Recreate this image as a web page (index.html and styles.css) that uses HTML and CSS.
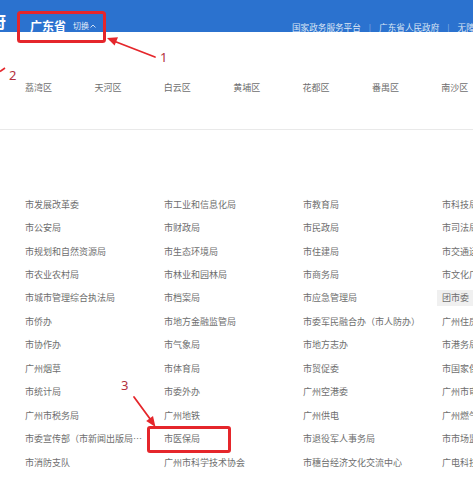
FILE: index.html
```html
<!DOCTYPE html>
<html lang="zh-CN">
<head>
<meta charset="utf-8">
<title>广东省</title>
<link rel="stylesheet" href="styles.css">
</head>
<body>
<div class="page">
  <header class="topbar">
    <span class="logo">府</span>
    <span class="province">广东省</span>
    <span class="switch">切换<svg class="caret" width="6" height="4" viewBox="0 0 6 4"><path d="M0.5 3.5 L3 1 L5.5 3.5" fill="none" stroke="#dfe9f6" stroke-width="0.9"/></svg></span>
    <nav class="links">
      <a>国家政务服务平台</a><span class="sep">|</span><a>广东省人民政府</a><span class="sep">|</span><a>无障碍浏览</a>
    </nav>
  </header>

  <section class="districts">
    <span>荔湾区</span><span>天河区</span><span>白云区</span><span>黄埔区</span><span>花都区</span><span>番禺区</span><span>南沙区</span>
  </section>

  <section class="depts">
    <div class="cell"><span class="item">市发展改革委</span></div>
    <div class="cell"><span class="item">市工业和信息化局</span></div>
    <div class="cell"><span class="item">市教育局</span></div>
    <div class="cell"><span class="item">市科技局</span></div>

    <div class="cell"><span class="item">市公安局</span></div>
    <div class="cell"><span class="item">市财政局</span></div>
    <div class="cell"><span class="item">市民政局</span></div>
    <div class="cell"><span class="item">市司法局</span></div>

    <div class="cell"><span class="item">市规划和自然资源局</span></div>
    <div class="cell"><span class="item">市生态环境局</span></div>
    <div class="cell"><span class="item">市住建局</span></div>
    <div class="cell"><span class="item">市交通运输局</span></div>

    <div class="cell"><span class="item">市农业农村局</span></div>
    <div class="cell"><span class="item">市林业和园林局</span></div>
    <div class="cell"><span class="item">市商务局</span></div>
    <div class="cell"><span class="item">市文化广电旅游局</span></div>

    <div class="cell"><span class="item">市城市管理综合执法局</span></div>
    <div class="cell"><span class="item">市档案局</span></div>
    <div class="cell"><span class="item">市应急管理局</span></div>
    <div class="cell"><span class="item active">团市委</span></div>

    <div class="cell"><span class="item">市侨办</span></div>
    <div class="cell"><span class="item">市地方金融监管局</span></div>
    <div class="cell"><span class="item">市委军民融合办（市人防办）</span></div>
    <div class="cell"><span class="item">广州住房公积金管理中心</span></div>

    <div class="cell"><span class="item">市协作办</span></div>
    <div class="cell"><span class="item">市气象局</span></div>
    <div class="cell"><span class="item">市地方志办</span></div>
    <div class="cell"><span class="item">市港务局</span></div>

    <div class="cell"><span class="item">广州烟草</span></div>
    <div class="cell"><span class="item">市体育局</span></div>
    <div class="cell"><span class="item">市贸促委</span></div>
    <div class="cell"><span class="item">市国家保密局</span></div>

    <div class="cell"><span class="item">市统计局</span></div>
    <div class="cell"><span class="item">市委外办</span></div>
    <div class="cell"><span class="item">广州空港委</span></div>
    <div class="cell"><span class="item">广州市审计局</span></div>

    <div class="cell"><span class="item">广州市税务局</span></div>
    <div class="cell"><span class="item">广州地铁</span></div>
    <div class="cell"><span class="item">广州供电</span></div>
    <div class="cell"><span class="item">广州燃气集团</span></div>

    <div class="cell"><span class="item">市委宣传部（市新闻出版局、市版权局）</span></div>
    <div class="cell"><span class="item">市医保局</span></div>
    <div class="cell"><span class="item">市退役军人事务局</span></div>
    <div class="cell"><span class="item">市市场监督管理局</span></div>

    <div class="cell"><span class="item">市消防支队</span></div>
    <div class="cell"><span class="item">广州市科学技术协会</span></div>
    <div class="cell"><span class="item">市穗台经济文化交流中心</span></div>
    <div class="cell"><span class="item">广电科技集团</span></div>
  </section>

  <svg class="marks" width="473" height="477" viewBox="0 0 473 477">
    <rect x="18.5" y="12.5" width="86" height="29" rx="2" fill="none" stroke="#e5262b" stroke-width="3"/>
    <line x1="155" y1="57" x2="115" y2="41.5" stroke="#e5262b" stroke-width="1.8" stroke-linecap="round"/>
    <polygon points="107,38 118,37.2 114.6,45.6" fill="#e5262b"/>
    <text x="160" y="62" class="num">1</text>

    <line x1="0" y1="71.5" x2="5" y2="68" stroke="#e5262b" stroke-width="1.6"/>
    <text x="9" y="80" class="num">2</text>

    <text x="121" y="390" class="num">3</text>
    <line x1="134" y1="397" x2="150.5" y2="419.5" stroke="#e5262b" stroke-width="1.8" stroke-linecap="round"/>
    <polygon points="155.5,427 153,416 146.2,421" fill="#e5262b"/>
    <rect x="148.5" y="427.5" width="81" height="24" rx="1.5" fill="none" stroke="#e5262b" stroke-width="3"/>
  </svg>
</div>
</body>
</html>
```

FILE: styles.css
```css
html, body {
  margin: 0;
  padding: 0;
  overflow: hidden;
  background: #ffffff;
}

.page {
  position: relative;
  width: 473px;
  height: 477px;
  overflow: hidden;
  font-family: "Noto Sans CJK SC", "Noto Sans", sans-serif;
  color: #6b6b6b;
}

.topbar {
  display: flex;
  align-items: flex-start;
  height: 32px;
  background: #2b72cf;
  overflow: hidden;
  white-space: nowrap;
}

.logo {
  flex-shrink: 0;
  margin-left: -11px;
  margin-top: 12px;
  font-size: 17px;
  line-height: 17px;
  font-weight: 700;
  color: #ffffff;
}

.province {
  flex-shrink: 0;
  margin-left: 24px;
  margin-top: 20px;
  font-size: 12px;
  line-height: 12px;
  font-weight: 700;
  color: #ffffff;
}

.switch {
  flex-shrink: 0;
  display: flex;
  align-items: center;
  gap: 1px;
  margin-left: 7px;
  margin-top: 22px;
  font-size: 8px;
  line-height: 8px;
  color: #e3ecf8;
}

.caret {
  display: block;
}

.links {
  flex-shrink: 0;
  display: flex;
  align-items: center;
  margin-left: 196px;
  margin-top: 22px;
  font-size: 8.6px;
  line-height: 10px;
  color: #dbe6f5;
}

.links .sep {
  margin: 0 8px;
  color: rgba(255, 255, 255, 0.45);
}

.districts {
  display: grid;
  grid-template-columns: repeat(7, 69.4px);
  padding: 50px 0 35px 25px;
  font-size: 9px;
  line-height: 12px;
  color: #6e6e6e;
  border-bottom: 1px solid #e9e9e9;
  white-space: nowrap;
}

.depts {
  display: grid;
  grid-template-columns: repeat(4, 139px);
  grid-auto-rows: 23.45px;
  padding: 63px 0 0 25px;
  font-size: 9px;
  line-height: 16px;
  color: #6e6e6e;
}

.cell {
  display: flex;
  align-items: center;
  white-space: nowrap;
  min-width: 0;
}

.item {
  display: block;
  margin-left: -5px;
  padding: 0 5px;
  max-width: 121px;
  overflow: hidden;
  text-overflow: ellipsis;
}

.cell:nth-child(4n) .item,
.cell:nth-child(4n+3) .item,
.cell:nth-child(4n+2) .item {
  max-width: none;
  overflow: visible;
}

.item.active {
  background: #f0f0f0;
}

.marks {
  position: absolute;
  top: 0;
  left: 0;
  pointer-events: none;
}

.num {
  font-family: "Noto Sans", "DejaVu Sans", sans-serif;
  font-size: 13px;
  fill: #b3303d;
}
```
